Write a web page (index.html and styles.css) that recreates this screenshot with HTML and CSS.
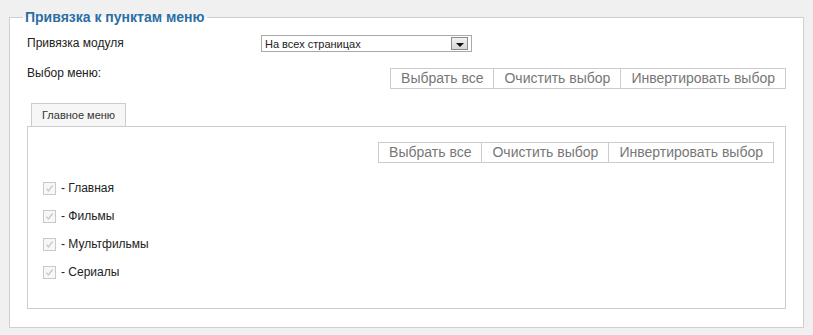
FILE: index.html
```html
<!DOCTYPE HTML>
<html>

<head>
    <meta charset='utf-8'>
    <link rel="stylesheet" href="styles.css">
</head>

<body>
    <fieldset class="menuBox">
        <legend>Привязка к пунктам меню</legend>

        <!--привязка модуля-->
        <div class="formRow">
            <label class="rowLabel">Привязка модуля</label>
            <div class="fakeSelect">
                <span>На всех страницах</span>
                <span class="selectBtn"><span class="arrow"></span></span>
            </div>
        </div>

        <!--выбор меню-->
        <div class="formRow menuRow">
            <label class="rowLabel">Выбор меню:</label>
            <div class="btnGroup">
                <span class="btn">Выбрать все</span>
                <span class="btn">Очистить выбор</span>
                <span class="btn">Инвертировать выбор</span>
            </div>
        </div>

        <!--вкладки-->
        <div class="tabs">
            <span class="tab">Главное меню</span>
        </div>
        <div class="tabPanel">
            <div class="panelBtns">
                <div class="btnGroup">
                    <span class="btn">Выбрать все</span>
                    <span class="btn">Очистить выбор</span>
                    <span class="btn">Инвертировать выбор</span>
                </div>
            </div>
            <ul class="itemList">
                <li><span class="check"><svg width="11" height="11" viewBox="0 0 11 11"><path d="M2.5 5.8 L4.5 8 L8.5 2.5" fill="none" stroke="#c8c8c8" stroke-width="1.3"/></svg></span>- Главная</li>
                <li><span class="check"><svg width="11" height="11" viewBox="0 0 11 11"><path d="M2.5 5.8 L4.5 8 L8.5 2.5" fill="none" stroke="#c8c8c8" stroke-width="1.3"/></svg></span>- Фильмы</li>
                <li><span class="check"><svg width="11" height="11" viewBox="0 0 11 11"><path d="M2.5 5.8 L4.5 8 L8.5 2.5" fill="none" stroke="#c8c8c8" stroke-width="1.3"/></svg></span>- Мультфильмы</li>
                <li><span class="check"><svg width="11" height="11" viewBox="0 0 11 11"><path d="M2.5 5.8 L4.5 8 L8.5 2.5" fill="none" stroke="#c8c8c8" stroke-width="1.3"/></svg></span>- Сериалы</li>
            </ul>
        </div>
    </fieldset>
</body>

</html>
```

FILE: styles.css
```css
body {
    margin: 0;
    background-color: #f0f0f0;
    font-family: "Liberation Sans", Arial, sans-serif;
    color: #222;
}

.menuBox {
    margin: 9px 9px 0 9px;
    padding: 9px 17px 18px 17px;
    border: 1px solid #cfcfcf;
    background-color: #fff;
    min-width: 0;
}

.menuBox legend {
    color: #2b6ea3;
    font-weight: bold;
    font-size: 14px;
    line-height: 16px;
    padding: 0 2px;
    margin-left: -4px;
}

.formRow {
    display: flex;
    align-items: center;
    height: 18px;
}

.rowLabel {
    width: 234px;
    font-size: 12px;
    line-height: 16px;
}

.fakeSelect {
    width: 211px;
    height: 17px;
    margin-top: 1px;
    box-sizing: border-box;
    border: 1px solid #a9a9a9;
    display: flex;
    align-items: center;
    justify-content: space-between;
    font-size: 11px;
    padding-left: 3px;
}

.selectBtn {
    width: 17px;
    height: 13px;
    box-sizing: border-box;
    margin-right: 3px;
    border: 1px solid #8c8c8c;
    background: linear-gradient(#f2f2f2, #d6d6d6);
    display: flex;
    align-items: center;
    justify-content: center;
}

.arrow {
    width: 0;
    height: 0;
    margin-top: 2px;
    border-left: 4px solid transparent;
    border-right: 4px solid transparent;
    border-top: 4px solid #111;
}

.menuRow {
    margin-top: 13px;
    height: auto;
    align-items: flex-start;
}

.menuRow .btnGroup {
    margin-left: auto;
    margin-top: 3px;
}

.btnGroup {
    display: flex;
}

.btn {
    border: 1px solid #cccccc;
    background-color: #fff;
    color: #777;
    font-size: 14px;
    line-height: 19px;
    padding: 0 10px;
}

.btn + .btn {
    margin-left: -1px;
}

.tabs {
    display: flex;
    margin-top: 14px;
    padding-left: 4px;
}

.tab {
    border: 1px solid #cccccc;
    border-bottom: none;
    background-color: #f6f6f6;
    font-size: 11px;
    line-height: 22px;
    padding: 0 10px;
    color: #333;
}

.tabPanel {
    border: 1px solid #cccccc;
    padding: 15px 11px 22px 15px;
}

.panelBtns {
    display: flex;
    justify-content: flex-end;
}

.itemList {
    list-style: none;
    margin: 11px 0 0 0;
    padding: 0;
}

.itemList li {
    display: flex;
    align-items: center;
    height: 28px;
    font-size: 12px;
}

.check {
    width: 13px;
    height: 13px;
    box-sizing: border-box;
    border: 1px solid #c9c9c9;
    background-color: #f7f7f7;
    margin-right: 5px;
    display: flex;
    align-items: center;
    justify-content: center;
}
```
